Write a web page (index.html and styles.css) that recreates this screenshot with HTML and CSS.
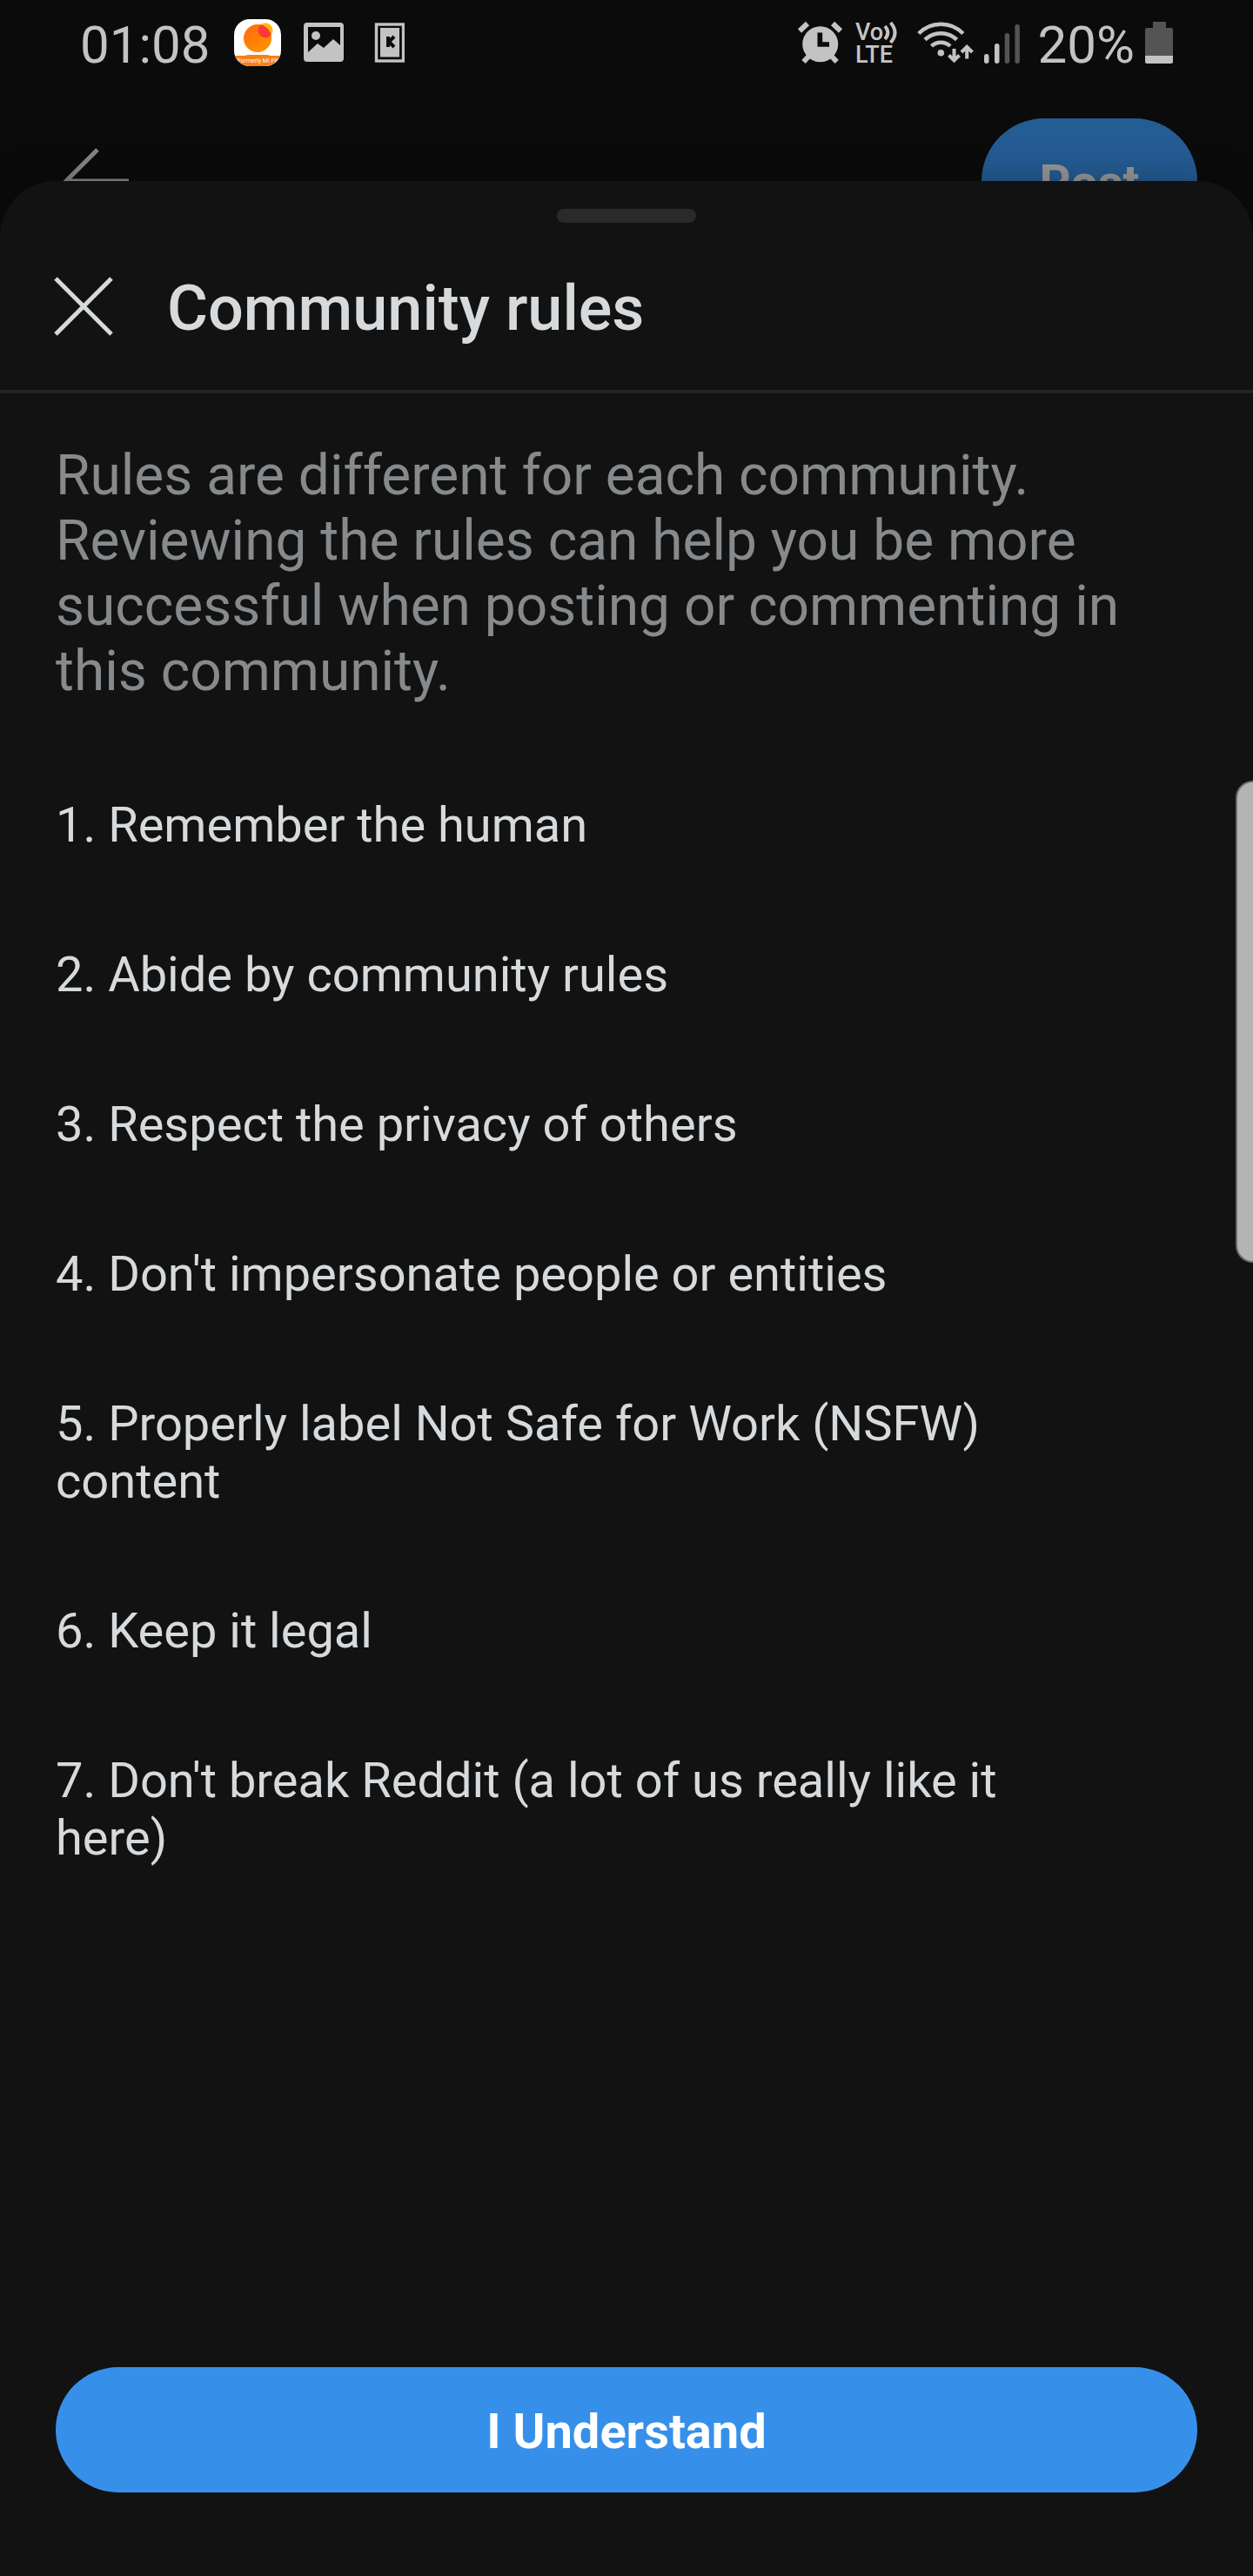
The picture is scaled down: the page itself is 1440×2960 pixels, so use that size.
FILE: index.html
```html
<!DOCTYPE html>
<html lang="en">
<head>
  <meta charset="utf-8">
  <meta name="viewport" content="width=device-width, initial-scale=1">
  <title>Community rules</title>
  <link rel="stylesheet" href="styles.css">
</head>
<body>
  <div class="screen">
    <header class="status">
      <div class="status-group status-left">
        <time class="status-text">01:08</time>
        <svg class="status-icon" width="56" height="56" viewBox="-2 0 56 56" aria-hidden="true">
          <defs>
            <clipPath id="tile"><rect width="54" height="54" rx="18"/></clipPath>
            <clipPath id="disc"><circle cx="27" cy="22" r="16"/></clipPath>
            <linearGradient id="sun" x1="0" y1="0" x2="1" y2="1">
              <stop offset="0" stop-color="#ff6a10"/>
              <stop offset="1" stop-color="#ff9600"/>
            </linearGradient>
          </defs>
          <g clip-path="url(#tile)">
            <rect width="54" height="54" fill="#fff"/>
            <circle cx="36" cy="13" r="8.500" fill="#ffb900"/>
            <circle cx="27" cy="22" r="16" fill="url(#sun)"/>
            <circle cx="36" cy="13" r="8.500" fill="#ff3838" clip-path="url(#disc)"/>
            <path d="M0 42H12L16 41H38L42 42H54V54H0Z" fill="#f98012"/>
            <text class="tile-text" x="27" y="50" text-anchor="middle">Formerly Mi Fit</text>
          </g>
        </svg>
        <svg class="status-icon" width="46" height="56" viewBox="0 0 46 56" aria-hidden="true">
          <path fill="#c3c3c3" fill-rule="evenodd" d="M4 4H42Q46 4 46 8V45Q46 49 42 49H4Q0 49 0 45V8Q0 4 4 4ZM5 9V38L16 28L23 33L34 23L42 30V9Z"/>
          <circle cx="14" cy="19" r="5" fill="#c3c3c3"/>
        </svg>
        <svg class="status-icon" width="44" height="56" viewBox="-10 0 44 56" aria-hidden="true">
          <rect x="1.500" y="6" width="31" height="42" fill="none" stroke="#c3c3c3" stroke-width="3.400"/>
          <rect x="6" y="10" width="22" height="33.500" fill="#c3c3c3"/>
          <path d="M15 20V32M22 20L16 26L22 32" fill="none" stroke="#0b0b0b" stroke-width="4"/>
        </svg>
      </div>
      <div class="status-group status-right">
        <svg class="status-icon" width="54" height="56" viewBox="0 0 54 56" aria-hidden="true">
          <circle cx="25.700" cy="28.700" r="20.500" fill="#c3c3c3"/>
          <path d="M2 13.500L11 5M40 5L49 13.500M6.500 49L13 42M38 42L44.700 49" fill="none" stroke="#c3c3c3" stroke-width="6"/>
          <path d="M25.300 15.500V29H36" fill="none" stroke="#0b0b0b" stroke-width="5.700"/>
        </svg>
        <svg class="status-icon" width="59" height="56" viewBox="0 0 59 56" role="img" aria-label="VoLTE">
          <text class="volte-text" x="0" y="24">Vo</text>
          <text class="volte-text" x="0" y="50">LTE</text>
          <path d="M34 8Q40.500 15.500 34 23M40.500 4Q50.500 15.500 40.500 27" fill="none" stroke="#c3c3c3" stroke-width="4"/>
        </svg>
        <svg class="status-icon" width="65" height="56" viewBox="0 0 65 56" aria-hidden="true">
          <g fill="none" stroke="#c3c3c3" stroke-width="4.500">
            <path d="M1.800 16.500A35.500 35.500 0 0 1 52.800 16.500"/>
            <path d="M9 23.500A26.500 26.500 0 0 1 45.600 23.500"/>
            <path d="M16.500 31A15.500 15.500 0 0 1 38 31"/>
            <path d="M42.500 34V47M36.500 41.500L42.500 47.500L48.500 41.500M57.200 45.500V32M51 38L57.200 31.800L63.400 38" stroke-width="4"/>
          </g>
          <circle cx="27.300" cy="38.700" r="3.800" fill="#c3c3c3"/>
        </svg>
        <svg class="status-icon" width="50" height="56" viewBox="0 0 50 56" aria-hidden="true">
          <rect x="0" y="40" width="5.500" height="11" rx="2.700" fill="#c3c3c3"/>
          <rect x="12" y="28" width="5.500" height="23" rx="2.700" fill="#c3c3c3"/>
          <rect x="23.700" y="16" width="5.500" height="35" rx="2.700" fill="#545454"/>
          <rect x="35.400" y="6" width="5.500" height="45" rx="2.700" fill="#545454"/>
        </svg>
        <span class="status-text">20%</span>
        <svg class="status-icon" width="32" height="56" viewBox="0 0 32 56" aria-hidden="true">
          <path d="M9 3H24V10H30Q32 10 32 12V42H0V12Q0 10 2 10H9Z" fill="#545454"/>
          <path d="M0 42H32V49Q32 51 30 51H2Q0 51 0 49Z" fill="#c3c3c3"/>
        </svg>
      </div>
    </header>

    <nav class="appbar">
      <button class="icon-button" type="button" aria-label="Back">
        <svg width="84" height="80" viewBox="0 0 84 80" aria-hidden="true">
          <path d="M48 4L12 40L48 76M12 40H84" fill="none" stroke="#868686" stroke-width="5"/>
        </svg>
      </button>
      <button class="post-button" type="button">Post</button>
    </nav>

    <main class="sheet">
      <div class="grabber"></div>
      <div class="sheet-header">
        <button class="icon-button" type="button" aria-label="Close">
          <svg width="68" height="68" viewBox="0 0 68 68" aria-hidden="true">
            <path d="M2 2L66 66M66 2L2 66" fill="none" stroke="#d7dadc" stroke-width="5"/>
          </svg>
        </button>
        <h1 class="title">Community rules</h1>
      </div>
      <div class="sheet-body">
        <p class="intro">Rules are different for each community. Reviewing the rules can help you be more successful when posting or commenting in this community.</p>
        <ol class="rules">
          <li>1. Remember the human</li>
          <li>2. Abide by community rules</li>
          <li>3. Respect the privacy of others</li>
          <li>4. Don't impersonate people or entities</li>
          <li>5. Properly label Not Safe for Work (NSFW) content</li>
          <li>6. Keep it legal</li>
          <li>7. Don't break Reddit (a lot of us really like it here)</li>
        </ol>
      </div>
      <button class="confirm-button" type="button">I Understand</button>
    </main>
    <div class="edge-handle"></div>
  </div>
</body>
</html>
```
FILE: styles.css
```css
* {
  box-sizing: border-box;
}

body {
  margin: 0;
  background: #0b0b0b;
  color: #d7dadc;
  font-family: Roboto, "Noto Sans", sans-serif;
}

button {
  padding: 0;
  border: 0;
  background: none;
  color: inherit;
  font: inherit;
}

.screen {
  position: relative;
  display: flex;
  flex-direction: column;
  min-height: 100vh;
  overflow: hidden;
}

/* Status bar */
.status {
  display: flex;
  justify-content: space-between;
  height: 100px;
  padding: 0 92px;
  color: #c3c3c3;
}

.status-group {
  display: flex;
  align-items: center;
}

.status-left {
  gap: 26px;
}

.status-right {
  gap: 12px;
}

.status-text {
  padding-top: 4px;
  font-size: 60px;
  line-height: 72px;
}

.status-icon {
  display: block;
  flex: none;
}

.tile-text {
  fill: #fff;
  font-size: 7px;
}

.volte-text {
  fill: #c3c3c3;
  font-size: 27px;
  font-weight: 500;
}

/* App bar, half hidden behind the sheet */
.appbar {
  display: flex;
  align-items: center;
  justify-content: space-between;
  height: 144px;
  margin: 36px 64px -72px;
}

.icon-button svg {
  display: block;
}

.post-button {
  width: 248px;
  height: 144px;
  padding-top: 4px;
  border-radius: 72px;
  background: #245c94;
  color: #989898;
  font-size: 56px;
  font-weight: 700;
}

/* Bottom sheet */
.sheet {
  position: relative;
  flex: 1;
  display: flex;
  flex-direction: column;
  padding: 32px 0 96px;
  border-radius: 64px 64px 0 0;
  background: #121212;
  box-shadow: 0 0 48px rgba(0, 0, 0, 0.3);
}

.grabber {
  align-self: center;
  width: 160px;
  height: 16px;
  border-radius: 8px;
  background: #2a2a2a;
}

.sheet-header {
  display: flex;
  align-items: center;
  gap: 62px;
  height: 196px;
  padding: 0 62px;
  border-bottom: 4px solid #242424;
}

.title {
  margin: 0;
  padding-top: 6px;
  font-size: 72px;
  font-weight: 500;
  line-height: 84px;
}

.sheet-body {
  flex: 1;
  padding: 57px 64px 96px;
}

.intro {
  margin: 0 0 106px;
  color: #878a8c;
  font-size: 64px;
  line-height: 75px;
}

.rules {
  display: flex;
  flex-direction: column;
  gap: 106px;
  margin: 0;
  padding: 0 136px 0 0;
  list-style: none;
  font-size: 56px;
  line-height: 66px;
}

.confirm-button {
  height: 144px;
  margin: 0 64px;
  padding-top: 4px;
  border-radius: 72px;
  background: #3690ea;
  color: #fff;
  font-size: 56px;
  font-weight: 700;
}

/* Edge panel handle, floats over the sheet */
.edge-handle {
  position: absolute;
  top: 897px;
  right: 0;
  width: 20px;
  height: 554px;
  border: 2px solid #6c6c6c;
  border-right: 0;
  border-radius: 20px 0 0 20px;
  background: #b4b4b4;
}
```
